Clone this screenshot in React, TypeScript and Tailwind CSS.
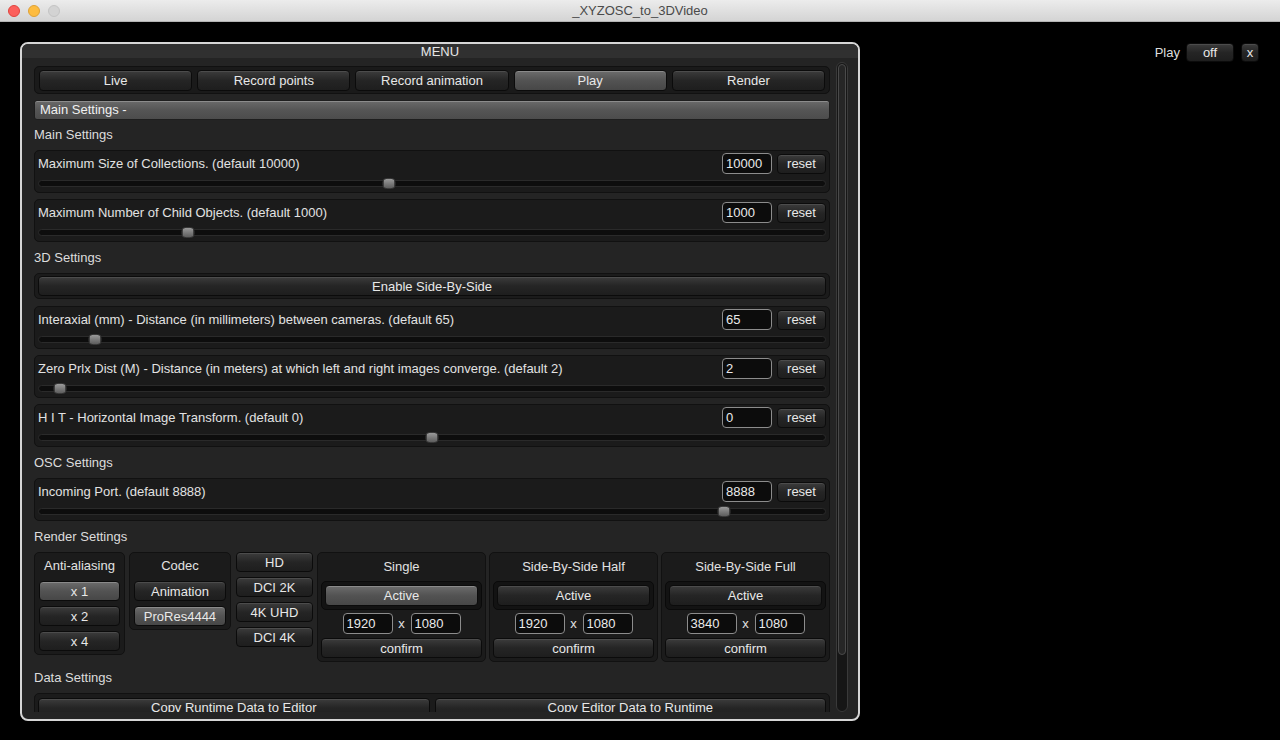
import clsx from "clsx";
import { ReactNode } from "react";

const FONT = "font-['Liberation_Sans',Arial,sans-serif]";

function Btn({
  children,
  active,
  className,
}: {
  children?: ReactNode;
  active?: boolean;
  className?: string;
}) {
  return (
    <div
      className={clsx(
        "flex items-center justify-center rounded-[4px] border border-[#0b0b0b] text-[13px] leading-none text-[#e8e8e8] bg-linear-to-b",
        active
          ? "from-[#6c6c6c] via-[#535353] to-[#474747] shadow-[inset_0_1px_0_#8a8a8a]"
          : "from-[#3c3c3c] via-[#252525] to-[#1e1e1e] shadow-[inset_0_1px_0_#4c4c4c]",
        className,
      )}
    >
      {children}
    </div>
  );
}

function Field({ value, className }: { value: string; className?: string }) {
  return (
    <div
      className={clsx(
        "flex h-[21px] w-[50px] items-center rounded-[4px] border border-[#8c8c8c] bg-[#0c0c0c] pl-[3px] text-[13px] text-[#eaeaea]",
        className,
      )}
    >
      {value}
    </div>
  );
}

function SectionLabel({ children, short }: { children: ReactNode; short?: boolean }) {
  return (
    <div
      className={clsx(
        "flex items-center text-[13px] text-[#dcdcdc]",
        short ? "h-[30px]" : "h-[31px]",
      )}
    >
      {children}
    </div>
  );
}

function Setting({ label, value, pos }: { label: string; value: string; pos: number }) {
  return (
    <div className="rounded-[5px] border border-[#111] bg-[#1b1b1b] px-[3px] pt-[2px] pb-[5px]">
      <div className="flex h-[21px] items-center">
        <span className="flex-1 text-[13px] text-[#e2e2e2]">{label}</span>
        <Field value={value} />
        <Btn className="ml-[5px] h-[20px] w-[49px]">reset</Btn>
      </div>
      <div className="relative mt-[6px] h-[7px] rounded-full border border-[#2a2a2a] bg-[#0d0d0d]">
        <div
          className="absolute top-[-3px] h-[11px] w-[13px] -translate-x-1/2 rounded-[4px] border border-[#3a3a3a] bg-linear-to-b from-[#9a9a9a] to-[#5e5e5e]"
          style={{ left: `${pos}%` }}
        />
      </div>
    </div>
  );
}

function ResBox({ title, active, w, h }: { title: string; active?: boolean; w: string; h: string }) {
  return (
    <div className="flex w-[169px] flex-col rounded-[5px] border border-[#111] bg-[#1b1b1b] px-[3px] pb-[3px]">
      <div className="flex h-[28px] items-center justify-center text-[13px] text-[#e2e2e2]">{title}</div>
      <div className="rounded-[5px] border border-[#0a0a0a] bg-[#131313] p-[3px]">
        <Btn active={active} className="h-[21px]">
          Active
        </Btn>
      </div>
      <div className="mt-[3px] flex h-[21px] items-center justify-center">
        <Field value={w} />
        <span className="w-[18px] text-center text-[13px] text-[#e2e2e2]">x</span>
        <Field value={h} />
      </div>
      <Btn className="mt-[4px] h-[20px]">confirm</Btn>
    </div>
  );
}

export default function App() {
  const tabs = ["Live", "Record points", "Record animation", "Play", "Render"];
  return (
    <div className={clsx("flex h-[740px] w-[1280px] flex-col overflow-hidden bg-black", FONT)}>
      {/* title bar */}
      <div className="relative flex h-[22px] items-center justify-center border-b border-[#b4b4b4] bg-linear-to-b from-[#ececec] to-[#d4d4d4] text-[13px] text-[#4a4a4a]">
        <div className="absolute left-[8px] top-[5px] flex gap-[8px]">
          <div className="h-[12px] w-[12px] rounded-full border border-[#e0443e] bg-[#fc605c]" />
          <div className="h-[12px] w-[12px] rounded-full border border-[#dea236] bg-[#fdbc40]" />
          <div className="h-[12px] w-[12px] rounded-full border border-[#c4c4c4] bg-[#d3d3d3]" />
        </div>
        _XYZOSC_to_3DVideo
      </div>

      <div className="flex flex-1">
        {/* menu window */}
        <div className="ml-[20px] mt-[20px] flex h-[679px] w-[840px] flex-col overflow-hidden rounded-[8px] border-2 border-[#d6d6d6] bg-[#242424]">
          <div className="flex h-[14px] items-center justify-center bg-[#303030] text-[13px] leading-none text-[#e6e6e6]">
            MENU
          </div>
          <div className="flex pl-[12px] pr-[10px] pt-[4px]">
            <div className="h-[650px] w-[796px] overflow-hidden pt-[4px]">
              {/* tabs */}
              <div className="flex h-[28px] items-center gap-[5px] rounded-[5px] border border-[#111] bg-[#1a1a1a] px-[4px]">
                {tabs.map((t) => (
                  <Btn key={t} active={t === "Play"} className="h-[21px] flex-1">
                    {t}
                  </Btn>
                ))}
              </div>
              <div className="mt-[6px] flex h-[20px] items-center rounded-[3px] border border-[#1e1e1e] bg-linear-to-b from-[#6a6a6a] via-[#555] to-[#4c4c4c] pl-[5px] text-[13px] text-[#f0f0f0] shadow-[inset_0_1px_0_#8c8c8c]">
                Main Settings -
              </div>

              <SectionLabel short>Main Settings</SectionLabel>
              <div className="flex flex-col gap-[6px]">
                <Setting label="Maximum Size of Collections. (default 10000)" value="10000" pos={44.5} />
                <Setting label="Maximum Number of Child Objects. (default 1000)" value="1000" pos={18.9} />
              </div>

              <SectionLabel>3D Settings</SectionLabel>
              <div className="flex flex-col gap-[6px]">
                <div className="mb-[1px] rounded-[5px] border border-[#111] bg-[#1b1b1b] px-[3px] py-[2px]">
                  <Btn className="h-[20px]">Enable Side-By-Side</Btn>
                </div>
                <Setting label="Interaxial (mm) - Distance (in millimeters) between cameras. (default 65)" value="65" pos={7.1} />
                <Setting
                  label="Zero Prlx Dist (M) - Distance (in meters) at which left and right images converge. (default 2)"
                  value="2"
                  pos={2.7}
                />
                <Setting label="H I T - Horizontal Image Transform. (default 0)" value="0" pos={50} />
              </div>

              <SectionLabel>OSC Settings</SectionLabel>
              <Setting label="Incoming Port. (default 8888)" value="8888" pos={87.1} />

              <SectionLabel>Render Settings</SectionLabel>
              <div className="flex h-[111px] items-start">
                <div className="flex w-[92px] flex-col gap-[5px] rounded-[5px] border border-[#111] bg-[#1b1b1b] px-[4px] pb-[3px]">
                  <div className="-mb-[3px] flex h-[26px] items-center justify-center text-[13px] text-[#e2e2e2]">
                    Anti-aliasing
                  </div>
                  <Btn active className="h-[20px]">x 1</Btn>
                  <Btn className="h-[20px]">x 2</Btn>
                  <Btn className="h-[20px]">x 4</Btn>
                </div>
                <div className="ml-[4px] flex w-[103px] flex-col gap-[5px] rounded-[5px] border border-[#111] bg-[#1b1b1b] px-[4px] pb-[3px]">
                  <div className="-mb-[3px] flex h-[26px] items-center justify-center text-[13px] text-[#e2e2e2]">
                    Codec
                  </div>
                  <Btn className="h-[20px]">Animation</Btn>
                  <Btn active className="h-[20px]">ProRes4444</Btn>
                </div>
                <div className="ml-[5px] flex w-[78px] flex-col gap-[5px]">
                  <Btn className="h-[20px]">HD</Btn>
                  <Btn className="h-[20px]">DCI 2K</Btn>
                  <Btn className="h-[20px]">4K UHD</Btn>
                  <Btn className="h-[20px]">DCI 4K</Btn>
                </div>
                <div className="ml-[4px] flex gap-[3px]">
                  <ResBox title="Single" active w="1920" h="1080" />
                  <ResBox title="Side-By-Side Half" w="1920" h="1080" />
                  <ResBox title="Side-By-Side Full" w="3840" h="1080" />
                </div>
              </div>

              <SectionLabel short>Data Settings</SectionLabel>
              <div className="flex gap-[5px] rounded-[5px] border border-[#111] bg-[#1b1b1b] px-[3px] pt-[4px] pb-[4px]">
                <Btn className="h-[20px] flex-1 pb-[2px]">Copy Runtime Data to Editor</Btn>
                <Btn className="h-[20px] flex-1 pb-[2px]">Copy Editor Data to Runtime</Btn>
              </div>
            </div>
            {/* scrollbar */}
            <div className="ml-[6px] h-[650px] w-[12px] rounded-[6px] border border-[#3a3a3a] bg-[#161616] p-[1px]">
              <div className="h-[591px] rounded-[5px] border border-[#4a4a4a] bg-[#262626]" />
            </div>
          </div>
        </div>

        {/* play controls */}
        <div className="ml-auto mr-[21px] mt-[21px] flex h-[19px] items-center">
          <span className="mr-[6px] text-[13px] text-[#dedede]">Play</span>
          <Btn className="h-[19px] w-[48px]">off</Btn>
          <Btn className="ml-[7px] h-[19px] w-[18px]">x</Btn>
        </div>
      </div>
    </div>
  );
}
